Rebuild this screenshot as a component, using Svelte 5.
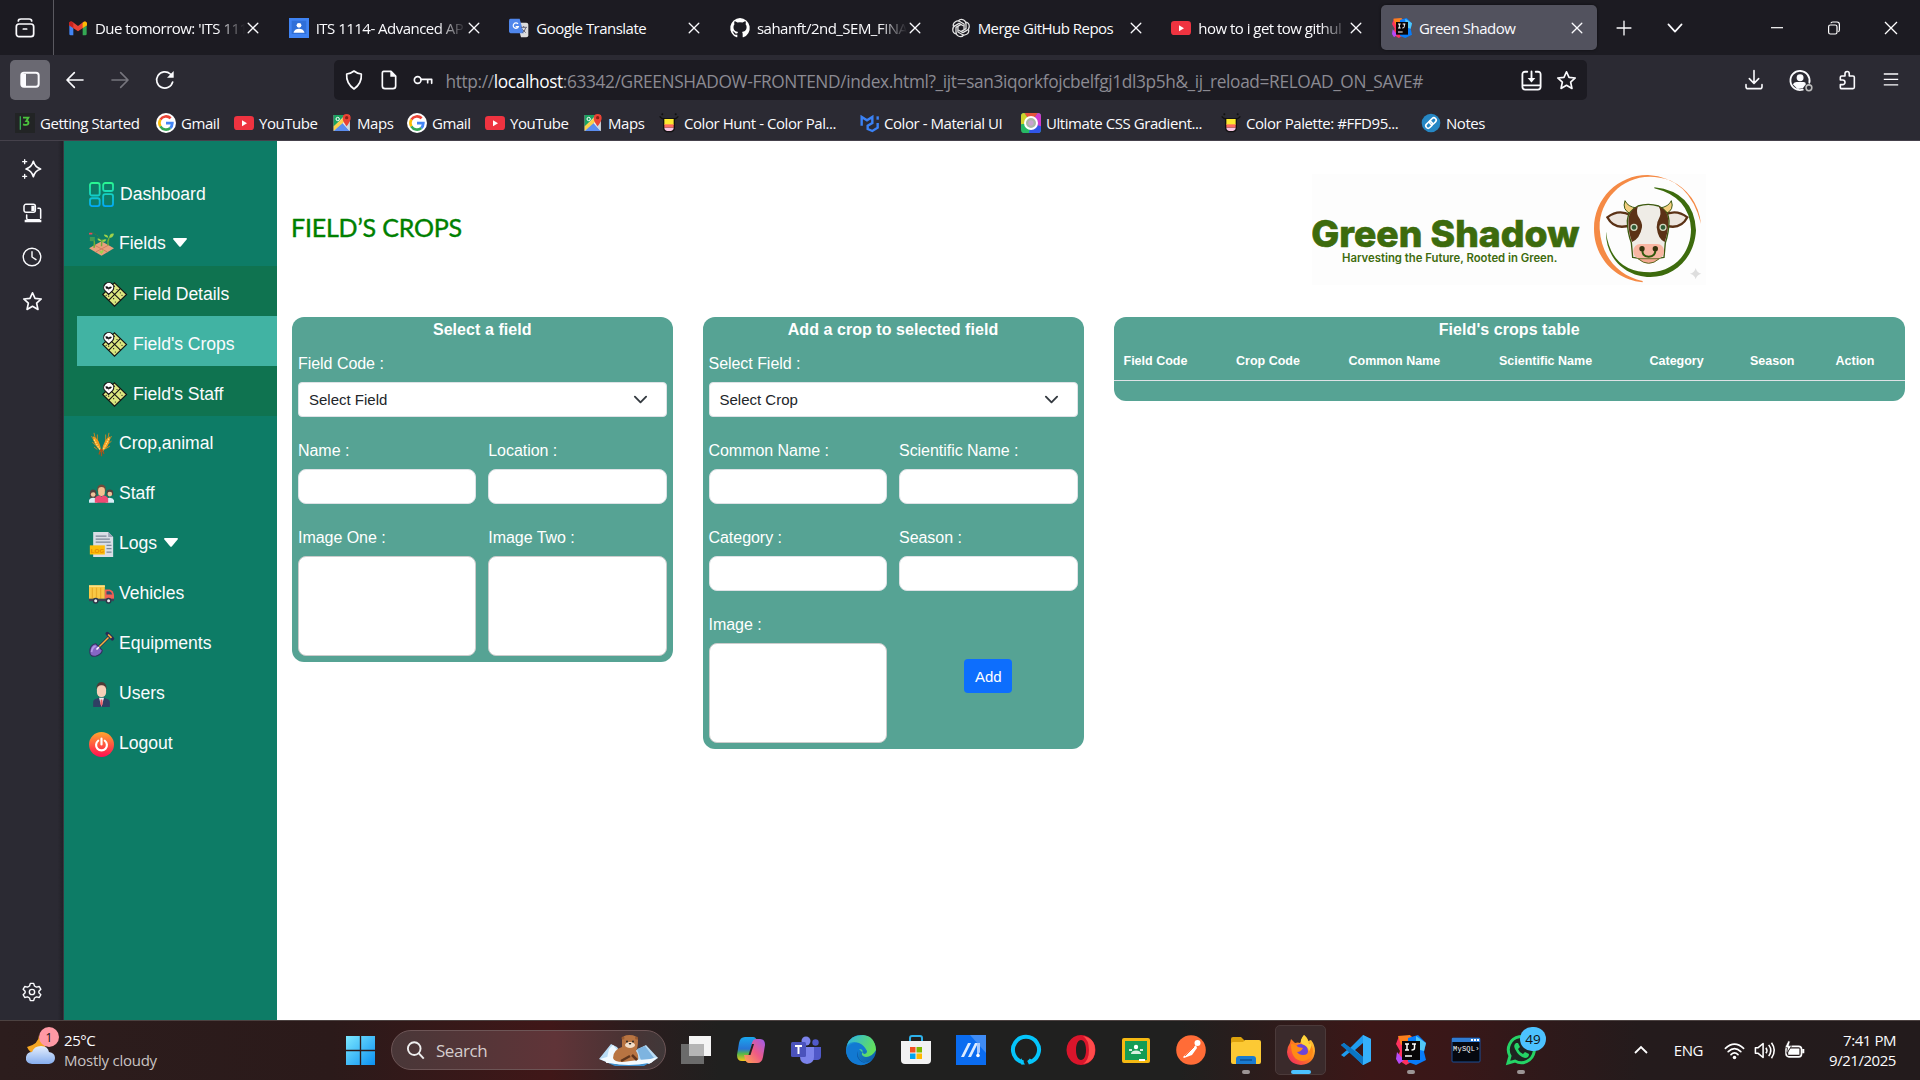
<script>
  const tabs = [
    { icon: 'gmail', text: "Due tomorrow: 'ITS 111", fade: true },
    { icon: 'classroomUser', text: 'ITS 1114- Advanced AP', fade: true },
    { icon: 'translate', text: 'Google Translate' },
    { icon: 'github', text: 'sahanft/2nd_SEM_FINA', fade: true },
    { icon: 'openai', text: 'Merge GitHub Repos' },
    { icon: 'youtube', text: 'how to i get tow githul', fade: true },
    { icon: 'idea', text: 'Green Shadow', active: true }
  ];

  const bookmarks = [
    { icon: 'flag', text: 'Getting Started' },
    { icon: 'google', text: 'Gmail' },
    { icon: 'youtube', text: 'YouTube' },
    { icon: 'maps', text: 'Maps' },
    { icon: 'google', text: 'Gmail' },
    { icon: 'youtube', text: 'YouTube' },
    { icon: 'maps', text: 'Maps' },
    { icon: 'colorhunt', text: 'Color Hunt - Color Pal...' },
    { icon: 'mui', text: 'Color - Material UI' },
    { icon: 'gradient', text: 'Ultimate CSS Gradient...' },
    { icon: 'colorhunt', text: 'Color Palette: #FFD95...' },
    { icon: 'link', text: 'Notes' }
  ];

  const menu = [
    { icon: 'dashboard', text: 'Dashboard', wide: true },
    { icon: 'fields', text: 'Fields', caret: true },
    { icon: 'plot', text: 'Field Details', sub: true },
    { icon: 'plot', text: "Field's Crops", sub: true, active: true },
    { icon: 'plot', text: "Field's Staff", sub: true },
    { icon: 'wheat', text: 'Crop,animal' },
    { icon: 'staff', text: 'Staff' },
    { icon: 'logs', text: 'Logs', caret: true },
    { icon: 'truck', text: 'Vehicles' },
    { icon: 'shovel', text: 'Equipments' },
    { icon: 'user', text: 'Users' },
    { icon: 'power', text: 'Logout' }
  ];

  const columns = ['Field Code', 'Crop Code', 'Common Name', 'Scientific Name', 'Category', 'Season', 'Action'];

  const apps = [
    { icon: 'taskview' },
    { icon: 'copilot' },
    { icon: 'teams' },
    { icon: 'edge' },
    { icon: 'store' },
    { icon: 'asus' },
    { icon: 'alexa' },
    { icon: 'opera' },
    { icon: 'classroom' },
    { icon: 'postman' },
    { icon: 'folder', running: true },
    { icon: 'firefox', active: true },
    { icon: 'vscode' },
    { icon: 'idea', running: true },
    { icon: 'mysql' },
    { icon: 'whatsapp', running: true, badge: '49' }
  ];

  const line = 'fill="none" stroke="#fbfbfe" stroke-linecap="round" stroke-linejoin="round"';
  const petal = (deg) =>
    `<path d="M11 4.500q3-4 8-1.500 4 2.200 3.500 7v6l-7 4" transform="rotate(${deg} 15 15)"/>`;

  // Every icon is drawn on a 30 x 30 grid.
  const icons = {
    // browser chrome
    archive: `<g ${line} stroke-width="2.600"><rect x="2" y="9" width="26" height="19" rx="4"/><path d="M5 4.500q0-3 4-3h12q4 0 4 3M12.500 16.500h5"/></g>`,
    close: `<path d="M7 7 23 23M23 7 7 23" fill="none" stroke="#fbfbfe" stroke-width="2.200" stroke-linecap="round"/>`,
    plus: `<path d="M15 2v26M2 15h26" fill="none" stroke="#fbfbfe" stroke-width="2.500" stroke-linecap="round"/>`,
    down: `<path d="M4 9l11 12L26 9" fill="none" stroke="#fbfbfe" stroke-width="2.800" stroke-linecap="round" stroke-linejoin="round"/>`,
    minimize: `<path d="M5 14.500h20" stroke="#fff" stroke-width="2"/>`,
    restore: `<g fill="none" stroke="#fff" stroke-width="2"><rect x="6" y="10" width="14" height="15" rx="3"/><path d="M10 7q0-2 3-2h7q4 0 4 4v9q0 3-2 3"/></g>`,
    winclose: `<path d="M5 5 25 25M25 5 5 25" stroke="#fff" stroke-width="2.200"/>`,
    panel: `<rect x="2" y="4" width="26" height="21" rx="4" fill="none" stroke="#fbfbfe" stroke-width="3"/><path d="M3 6h6v18H3z" fill="#fbfbfe"/>`,
    back: `<path d="M27 15H4M14 4 3 15l11 11" ${line} stroke-width="2.500"/>`,
    forward: `<path d="M3 15h23M16 4l11 11-11 11" fill="none" stroke="#76757d" stroke-width="2.500" stroke-linecap="round" stroke-linejoin="round"/>`,
    reload: `<path d="M26.500 18A12.200 12.200 0 1 1 23 6l3 3" ${line} stroke-width="2.500"/><path d="M28 1.500v10H18z" fill="#fbfbfe"/>`,
    shield: `<path d="M15 1.500q5 4 11 4.500 1 14-11 22.500Q3 20 4 6q6-.5 11-4.500z" ${line} stroke-width="2.500"/>`,
    doc: `<path d="M7 2h11l7 7v15q0 4-4 4H9q-4 0-4-4V5q0-3 2-3z" ${line} stroke-width="2.500"/><path d="M17 1v9h9z" fill="#fbfbfe"/>`,
    key: `<g ${line} stroke-width="2.500"><circle cx="7" cy="15" r="5"/><path d="M12 14h16v6M22 14v5"/></g>`,
    savepage: `<g ${line} stroke-width="2.600"><path d="M9 2.500H6Q2 2.500 2 6.500V24q0 4 4 4h18q4 0 4-4V6.500q0-4-4-4h-3M3 22h24M15 2v13"/></g><path d="M9.500 11.500h11L15 18z" fill="#fbfbfe"/>`,
    star: `<path d="M15 2.500l3.600 8 8.900.9-6.600 6 1.900 8.900-7.800-4.500-7.800 4.500 1.900-8.900-6.600-6 8.900-.9z" ${line} stroke-width="2.400"/>`,
    download: `<path d="M15 1v18M8 13l7 7 7-7M3 22v3q0 3 3 3h18q3 0 3-3v-3" ${line} stroke-width="2.400"/>`,
    account: `<path d="M18 27a12.500 12.500 0 1 1 8.500-9" ${line} stroke-width="2.400"/><circle cx="14.500" cy="11.500" r="4.500" fill="#fbfbfe"/><path d="M5 20q2-3 5-3h9q3 0 3 3l-4 5-7 1z" fill="#fbfbfe"/><circle cx="26" cy="24.500" r="3.800" fill="#2b2a33" stroke="#bbb" stroke-width="2"/>`,
    extension: `<path d="M5 15v-4q0-2 2-2h5V5.500a3.200 3.200 0 0 1 6.400 0V9H24q2 0 2 2v15q0 2-2 2H7q-2 0-2-2v-4h3.500a3.300 3.300 0 0 0 0-7z" ${line} stroke-width="2.400"/>`,
    hamburger: `<path d="M3 5h24M3 14h24M3 23h24" stroke="#fbfbfe" stroke-width="2.200"/>`,

    // browser side strip
    sparkle: `<path d="M17 3.500q2.500 9 11 11.500-8.500 2.500-11 11.500-2.500-9-11-11.500 8.500-2.500 11-11.500z" ${line} stroke-width="2.500"/><path d="M4 1v6M1 4h6M4 23v6M1 26h6" ${line} stroke-width="2"/>`,
    devices: `<g ${line} stroke-width="2.300"><rect x="3" y="2" width="17" height="12" rx="3"/><path d="M24 8h2q2 0 2 2v13M7 18v5q0 2 2 2h17"/></g><path d="M14 4h5v8h-5zM4 25h25v4H4z" fill="#fbfbfe"/>`,
    history: `<g ${line} stroke-width="2.100"><circle cx="15" cy="15" r="13.200"/><path d="M15 7v8l6 4"/></g>`,
    gear: `<g ${line} stroke-width="2.100"><path d="M12.500 2h5l1.200 4 3 1.700 4.200-1 2.400 4.300-3 3v2l3 3-2.400 4.300-4.200-1-3 1.700-1.200 4h-5l-1.200-4-3-1.700-4.200 1L1.700 19l3-3v-2l-3-3 2.400-4.300 4.200 1 3-1.700z"/><circle cx="15" cy="15" r="4"/></g>`,

    // site icons
    gmail: `<path d="M2 8v16q0 2 2 2h4V14z" fill="#4285f4"/><path d="M28 8v16q0 2-2 2h-4V14z" fill="#34a853"/><path d="M1.500 8q1-4 5-2.500L15 12l8.500-6.500q4-1.500 5 2.500v3L15 20 1.500 11z" fill="#ea4335"/><path d="M22 7q5-4 6.500 1v3L22 15z" fill="#fbbc04"/><path d="M1.500 8v3L8 15V7Q2 3 1.500 8z" fill="#c5221f"/>`,
    classroomUser: `<path d="M0 0h30v30H0z" fill="#3f83f3"/><path d="M4 4h22v20H4z" fill="#2f6fd8"/><circle cx="15" cy="11" r="3.600" fill="#fff"/><path d="M7 21q2-5 8-5t8 5v1H7z" fill="#fff"/>`,
    translate: `<path d="M12 7h14q3 0 3 3v16q0 3-3 3h-8z" fill="#dcdcdc"/><path d="M2 1h14l6 22H4q-4 0-4-4V4q0-3 2-3z" fill="#4f86ec"/><path d="M13.500 9a4 4 0 1 0 .5 4H10" fill="none" stroke="#fff" stroke-width="1.800"/><path d="M18 14h9M22 12v2M25 15q-2 6-5 7M20 17l5 5" stroke="#667" stroke-width="1.500" fill="none"/>`,
    github: `<path d="M15 0a15 15 0 0 0-5 29c1 .2 1-.4 1-1v-3c-4 1-5-1-5.500-2.500-.6-1-1-1.500-1.800-2 1.500-.8 3 .5 3.500 1.500 1.200 1.800 3 1.500 4 1 .1-1 .5-1.600 1-2-3.500-.5-7-2-7-7.500 0-1.700.6-3 1.500-4-.2-.7-.7-2.500.1-4.500 1.500 0 3 1 4.200 1.800a14 14 0 0 1 8 0C20.500 6 22 5 23.300 5c.8 2 .3 3.800.1 4.500 1 1 1.500 2.300 1.500 4 0 5.500-3.500 7-7 7.500.8.700 1.100 1.700 1.100 3v4c0 .600 0 1.200 1 1A15 15 0 0 0 15 0z" fill="#fff"/>`,
    openai: `<g fill="none" stroke="#e4e4e4" stroke-width="1.900" stroke-linejoin="round">${[0, 60, 120, 180, 240, 300].map(petal).join('')}</g>`,
    youtube: `<rect y="4.500" width="30" height="21" rx="5" fill="#ef3340"/><path d="M12 11v9l7.500-4.500z" fill="#fff"/>`,
    idea: `<path d="M3 1h12l4 4v20l-9 5-9-6 3-8-4-7z" fill="#fe315d"/><path d="M2 1 14 0l4 5L5 10z" fill="#fc801d"/><path d="M12 3 22 0l8 8-2 9 2 8-10 5-8-3z" fill="#087cfa"/><path d="M20 1l10 7-2 8-8-2z" fill="#52c8f5"/><path d="M1 17l7 8-5 4-3-5z" fill="#b74af7"/><path d="M6 6h18v19H6z" fill="#080506"/><path d="M9 9h4M11 9v6M9 15h4M16 9h4M18.500 9v4q0 2-3 2M9 21h7" fill="none" stroke="#fff" stroke-width="1.500"/>`,
    flag: `<path d="M0 0h30v30H0z" fill="#222425"/><path d="M8 5v20" stroke="#35a853" stroke-width="2"/><path d="M12 7h8l-3 5q4 0 3 4-1 3-8 1" fill="none" stroke="#4bc23c" stroke-width="2.800"/>`,
    google: `<circle cx="15" cy="15" r="15" fill="#fff"/><g fill="none" stroke-width="4"><path d="M6.500 10a10 10 0 0 1 15.500-2" stroke="#ea4335"/><path d="M6.500 20a10 10 0 0 1 0-10" stroke="#fbbc05"/><path d="M21.500 22.500A10 10 0 0 1 6.500 20" stroke="#34a853"/><path d="M15 15.200h9.500q-.2 4.800-3 7.300" stroke="#4285f4"/></g>`,
    maps: `<g transform="translate(1.500 0)"><path d="M1 3h24v24H1z" fill="#eee"/><path d="M1 3h17L1 21z" fill="#1aa260"/><path d="M1 27 13 14l12 13z" fill="#5b8def"/><path d="M1 20v7l24-21v-3h-5z" fill="#fbd14b"/><path d="M17 18l8 9V13z" fill="#cfd8dc"/><circle cx="7" cy="9" r="2.500" fill="none" stroke="#fff" stroke-width="1.500"/><path d="M20.500 20q-6-7-6-12.500a6 6 0 0 1 12 0Q26.500 12 20.500 20z" fill="#ea4335"/><circle cx="20.500" cy="7" r="2.500" fill="#8c2116"/></g>`,
    colorhunt: `<g fill="none" stroke="#111" stroke-width="2"><path d="M1 5q4 5 7 3M29 5q-4 5-7 3"/></g><circle cx="5" cy="2" r="1.500" fill="#111"/><circle cx="25" cy="2" r="1.500" fill="#111"/><path d="M6 8h18v14q0 7-9 7t-9-7z" fill="#111"/><path d="M8 9h14v9H8z" fill="#fde92f"/><path d="M8 17h14v5H8z" fill="#ff6b5e"/><path d="M8 22h14q0 5-7 5t-7-5z" fill="#f9c7e4"/>`,
    mui: `<g fill="none" stroke="#3b82f6" stroke-width="3.600"><path d="M4 19V6l8 5 8-5v9l-7 4v5l7 3 8-5v-7"/><path d="M28 5v5"/></g>`,
    gradient: `<rect width="30" height="30" rx="5" fill="#27b965"/><path d="M5 0h20L15 15z" fill="#e8533c"/><path d="M25 0q5 0 5 5v20L15 15z" fill="#d03bd0"/><path d="M5 0Q0 0 0 5v12l15-2z" fill="#cfd22c"/><path d="M30 20v5q0 5-5 5H12l3-15z" fill="#3156e8"/><circle cx="15" cy="15" r="9" fill="#a9b6a6" stroke="#fff" stroke-width="3"/><circle cx="15" cy="15" r="4" fill="#c9a4cf"/>`,
    link: `<circle cx="15" cy="15" r="14" fill="#2687c4"/><g fill="none" stroke="#fff" stroke-width="2.400" transform="rotate(-45 15 15)"><rect x="5.500" y="11.500" width="11" height="7" rx="3.500"/><rect x="13.500" y="11.500" width="11" height="7" rx="3.500"/></g>`,

    // site menu
    dashboard: `<g fill="none" stroke="url(#g-dash)" stroke-width="2.200"><rect x="1.200" y="1.200" width="11.600" height="15" rx="2.500"/><rect x="17" y="1.200" width="11.800" height="9.600" rx="2.500"/><rect x="1.200" y="19.500" width="11.600" height="9.400" rx="2.500"/><rect x="17" y="14.500" width="11.800" height="14.400" rx="2.500"/></g>`,
    fields: `<path d="M0 19.500 15 11l15 8.500-15 9z" fill="#e9a07c"/><path d="M7 16l15 8M23 16 8 24" stroke="#c77b5c" stroke-width="1"/><path d="M6 19q1-7 0-9M15 17q0-5 1-8M23 16q-1-5 1-9" stroke="#6fae35" stroke-width="1.800" fill="none"/><path d="M23 7q-5-1-5-4 5 0 5 4zM24 7q1-6 6-5-1 5-6 5zM15 11q-4 0-5-3 4-1 5 3zM16 12q4 0 5-3-5-1-5 3z" fill="#9fd24a"/><path d="M1 1h4l6 4 3 4" stroke="#4e7a3a" stroke-width="1" stroke-dasharray="2 1" fill="none"/><path d="M0 1h4v2H0z" fill="#e4485d"/><path d="M1 6h6v5H1z" fill="#3f9a55"/><path d="M13 23l2 2 2-3" stroke="#9fd24a" stroke-width="2" fill="none"/>`,
    plot: `<g stroke="#111" stroke-width="1.300"><path d="M15 1 29.500 15 15 29 .800 15z" fill="#dbe67f"/><path d="M8 8l14.500 14M22 8 8 22" fill="none"/></g><g fill="#111"><circle cx="15" cy="5" r=".7"/><circle cx="18" cy="9" r=".7"/><circle cx="22" cy="13" r=".7"/><circle cx="24" cy="16" r=".7"/><circle cx="14" cy="20" r=".7"/><circle cx="16" cy="24" r=".7"/><circle cx="5" cy="16" r=".7"/><circle cx="8" cy="17" r=".7"/></g><path d="M8 15 3.500 10.500A6 6 0 1 1 13 10z" fill="#fff" stroke="#111" stroke-width="1.300"/><path d="M8 10V6M8 8Q4 9 4.500 5.500 8 5 8 8zM8 8q3 .5 3.500-2Q8 5 8 8z" fill="#111" stroke="#111" stroke-width=".5"/>`,
    wheat: `<g stroke="#e58a18" stroke-width="1" fill="none"><path d="M3 5l4 7M6 1l2 9M4 12l4 4M6 18l4 3M24 1l-2 10M27 5l-4 7M27 11l-5 4M25 17l-5 3M10 3v8M20 3v8"/></g><path d="M4.500 5q8 2 10 17Q6 18 4.500 5zM25.500 5q-8 3-10 18 9-4 10-18z" fill="#f39a1e"/><path d="M6 9l8 14M24 8l-8 15" stroke="#ffe07a" stroke-width="1.500" stroke-dasharray="2 1"/><path d="M15 20v9M14 21l-2 6M16 21l2 5" stroke="#a4531c" stroke-width="1.500"/>`,
    staff: `<path d="M1 14q0-5 4-5t4 5v5H1zM21 13q0-4 4-4t4 4v3h-8z" fill="#54413d"/><circle cx="5" cy="15" r="2.800" fill="#f0c29a"/><circle cx="25" cy="14.500" r="2.800" fill="#f0c29a"/><path d="M0 25v-3q1-3 5-3t5 3v3zM20 25v-3q1-3 5-3t5 3v3z" fill="#d8edf6"/><path d="M10 11q-1-8 5-8t5 8z" fill="#6f4a3a"/><rect x="11" y="6" width="8" height="11" rx="4" fill="#f2c190"/><path d="M7 25v-5q1-3 6-4l2 2 2-2q5 1 6 4v5z" fill="#ee4a73"/>`,
    logs: `<path d="M5 0h18l6 6v24H5z" fill="#d9dee6"/><path d="M23 0v6h6z" fill="#97a3b5"/><path d="M8 5h13M8 8.500h17M8 12h18M21 16h6M21 20h6M21 24h6" stroke="#7b8797" stroke-width="1.500"/><path d="M1 16h18v11H1z" fill="#fdbd0a"/><text x="2.200" y="24.800" font-family="Liberation Sans, sans-serif" font-size="7.500" font-weight="700" fill="#e88a00">LOG</text>`,
    truck: `<path d="M0 4h19v17H0z" fill="#f9c845"/><path d="M0 4h19v2H0z" fill="#fde082"/><path d="M4 7v13M9 7v13M14 7v13" stroke="#e9ac2b" stroke-width="1.500"/><path d="M19 9h6q4 1 5 7v5H19z" fill="#ee6155"/><path d="M21 11h4q2 1 3 4h-7z" fill="#35516b"/><path d="M0 20h30v3H0z" fill="#3b4557"/><circle cx="8" cy="22.500" r="3.500" fill="#2d3748"/><circle cx="8" cy="22.500" r="1.800" fill="#eee"/><circle cx="23.500" cy="22.500" r="3.500" fill="#2d3748"/><circle cx="23.500" cy="22.500" r="1.800" fill="#eee"/>`,
    shovel: `<path d="M11 19 24 6" stroke="#2a2d55" stroke-width="3.500"/><path d="M11 19 24 6" stroke="#f5b53d" stroke-width="1.800"/><path d="M22 2l6 6" stroke="#2a2d55" stroke-width="4.500" stroke-linecap="round"/><path d="M23 3l4 4" stroke="#f5b53d" stroke-width="2"/><path d="M1 24q0-9 7-10l8 8q-1 5-8 7-7 1-7-5z" fill="#8566c4" stroke="#33305f" stroke-width="1.300"/><path d="M3 24q1-6 5-7" stroke="#b59ae8" stroke-width="2" fill="none"/><path d="M9 21l3-3" stroke="#fff" stroke-width="2"/>`,
    user: `<path d="M9 8q0-8 6-8t6 8z" fill="#4d3a36"/><rect x="9.500" y="4" width="11" height="14" rx="5" fill="#f6d0b8"/><path d="M5 30v-6q0-3 4-4l3-1h6l3 1q4 1 4 4v6z" fill="#2f3f63"/><path d="M12 19h6l-3 11z" fill="#eee"/><path d="M14 21h2l.5 5-1.500 3-1.500-3z" fill="#ef5d64"/>`,
    power: `<circle cx="15" cy="15" r="15" fill="url(#g-power)"/><path d="M11 10.500a6.500 6.500 0 1 0 8 0M15 8v7" fill="none" stroke="#fff" stroke-width="2.600" stroke-linecap="round"/>`,

    // taskbar
    windows: `<g fill="url(#g-win)"><path d="M0 0h14.300v14.300H0zM15.700 0H30v14.300H15.700zM0 15.700h14.300V30H0zM15.700 15.700H30V30H15.700z"/></g>`,
    taskview: `<path d="M8 1h22v20H8z" fill="#f4f4f4"/><path d="M0 9h23v20H0z" fill="#6b6b6b"/><path d="M8 9h15v12H8z" fill="#b5b5b5"/>`,
    copilot: `<path d="M9 2h8q3 0 4 4l1 4h-5l-3 12q-1 4-4 4H6q-5 0-5-6l2-12q1-6 6-6z" fill="url(#g-cop1)"/><path d="M21 28h-8q-3 0-4-4l-1-4h5l3-12q1-4 4-4h4q5 0 5 6l-2 12q-1 6-6 6z" fill="url(#g-cop2)"/><path d="M12.500 20l3.500-11h2L14.500 20z" fill="#222"/>`,
    teams: `<circle cx="15" cy="6" r="4.500" fill="#7b83eb"/><circle cx="24.500" cy="7.500" r="3.200" fill="#5059c9"/><path d="M20 12h10v9q0 4-4 4h-6z" fill="#5059c9"/><path d="M9 12h14v10q0 6-7 7-7-1-7-7z" fill="#7b83eb"/><rect x="0" y="7" width="15" height="15" rx="1.500" fill="#4b53bc"/><path d="M4 11h7M7.500 11v8" stroke="#fff" stroke-width="2"/>`,
    edge: `<circle cx="15" cy="15" r="15" fill="url(#g-edge)"/><path d="M0 15Q3 7 12 8q8 1 9 9-4-4-8 0-2 8 6 10 5 0 8-3-6 7-14 6Q1 28 0 15z" fill="#1279d2"/><path d="M13 14q5 0 3 4-1 3 4 4 6 0 10-7-1-14-13-15Q4 0 1 10q5-5 12-2 5 2 8 8 0 3-3 3z" fill="url(#g-edge2)"/><path d="M12 16q-3 7 4 11 5 2 10-3-6 6-12 1-3-3-2-9z" fill="#0b4f96"/>`,
    store: `<path d="M9 7V3q0-2 2-2h8q2 0 2 2v4" fill="none" stroke="#2db1ea" stroke-width="2"/><path d="M0 6h30v19q0 4-4 4H4q-4 0-4-4z" fill="#f2f2f2"/><path d="M9 12h5.500v5.500H9z" fill="#f25022"/><path d="M15.500 12H21v5.500h-5.500z" fill="#7fba00"/><path d="M9 18.500h5.500V24H9z" fill="#00a4ef"/><path d="M15.500 18.500H21V24h-5.500z" fill="#ffb900"/>`,
    asus: `<path d="M0 0h30v30H0z" fill="#0a6cf0"/><path d="M30 0v18L14 0z" fill="#3f8cf5"/><path d="M5 22 12 8h3L8 22zM12 22l7-14h3l-7 14z" fill="#dcebff"/><path d="M21 8h3v9l-3 5z" fill="#a9cbff"/><circle cx="22" cy="20.500" r="1.800" fill="#fff"/>`,
    alexa: `<path d="M12.500 27.500A13 13 0 1 1 17.500 27.500Q20 25.500 20.500 24.500" fill="none" stroke="#05c5fb" stroke-width="4"/><path d="M10 23l4 6.500h-4z" fill="#05c5fb"/>`,
    opera: `<path fill-rule="evenodd" d="M15 0a14.500 15 0 1 0 .01 0zM15 5c3 0 5 4 5 10s-2 10-5 10-5-4-5-10 2-10 5-10z" fill="#d9152b"/><path d="M17 1q12 2 12 14T17 29q6-4 6-14T17 1z" fill="#ff4b4b"/>`,
    classroom: `<rect x="1" y="3" width="28" height="25" rx="2" fill="#f5b912"/><path d="M4 6h22v19H4z" fill="#149c55"/><circle cx="15" cy="12" r="2.200" fill="#fff"/><path d="M10 19q0-3.500 5-3.500t5 3.500zM8 14h3v2H8zM19 14h3v2h-3z" fill="#d8efdf"/><path d="M18 24h6v2h-6z" fill="#fff"/>`,
    postman: `<circle cx="15" cy="15" r="14.800" fill="#ff6c37"/><circle cx="21.500" cy="8" r="3" fill="#fff"/><path d="M20 10 7 22l1 1 8-3 5-7z" fill="#fff"/><path d="M18 12 9 21" stroke="#ff6c37" stroke-width="1"/>`,
    folder: `<path d="M0 4q0-2 2-2h8l4 4v6H0z" fill="#dda20d"/><path d="M0 9q0-2 2-2h10l2-2h14q2 0 2 2v20q0 2-2 2H2q-2 0-2-2z" fill="#fcc934"/><path d="M5 29v-5q0-3 3-3h14q3 0 3 3v5z" fill="#1a7bd0"/><path d="M9 25h12" stroke="#0b4f94" stroke-width="1.500"/>`,
    firefox: `<path d="M15 30Q2 29 1 17q0-5 3-9l1-4 4 4q3-1 5 0l4-8q3 2 4 6l3-1q4 5 4 11-1 13-14 14z" fill="url(#g-fox)"/><circle cx="15" cy="16" r="7" fill="#6d45d8"/><path d="M5 9q5 0 7 3l5 1q-2 4-6 4 2 3 6 3 5 0 7-5 0-5-4-8l3 1q6 6 3 12-4 6-10 6Q5 25 5 9z" fill="#ff8a16"/><path d="M18 0q-5 5-2 9 6 2 7 7 3-4 2-8-1 1-2 1-1-6-5-9z" fill="#ffd43b"/>`,
    vscode: `<path d="M22 0l8 4v22l-8 4L9 17l-6 5-3-2 6-5-6-5 3-2 6 5zM22 8l-8 7 8 7z" fill="#1f9cf0" fill-rule="evenodd"/><path d="M22 0l8 4v22l-8 4z" fill="#35b0fb"/><path d="M3 8 0 10l22 20v-8z" fill="#0b76c4"/>`,
    mysql: `<rect x="1" y="3" width="28" height="24" rx="1" fill="#05080f" stroke="#1b4f97" stroke-width="1"/><path d="M1 3h28v4H1z" fill="#2f7cd3"/><path d="M20 4h2v2h-2zM23 4h2v2h-2zM26 4h2v2h-2z" fill="#fff"/><text x="2" y="15.500" font-family="Liberation Mono, monospace" font-size="7" textLength="26" fill="#fff">MySQL›</text>`,
    whatsapp: `<path d="M2 28l2-7A13 13 0 1 1 9 26z" fill="#1e2321" stroke="#25d366" stroke-width="3"/><path d="M10 8q-3 2-1 6 4 8 10 9 4 0 4-4l-4-2-2 2q-4-2-5-5l2-2-2-4z" fill="#25d366"/>`,
    search: `<g fill="none" stroke="#eee" stroke-width="3"><circle cx="13" cy="12" r="10"/><path d="M20 19l8 9"/></g>`,
    chevronUp: `<path d="M5 20l10-10 10 10" fill="none" stroke="#fff" stroke-width="3"/>`,
    wifi: `<g fill="none" stroke="#fff" stroke-width="2.400" stroke-linecap="round"><path d="M2 12q13-12 26 0M6 16.500q9-8.500 18 0M10 21q5-5 10 0"/></g><circle cx="15" cy="25" r="2.500" fill="#fff"/>`,
    volume: `<g fill="none" stroke="#fff" stroke-width="2.200" stroke-linejoin="round"><path d="M2 11h4l7-6v20l-7-6H2zM17 11q3 4 0 8M21 7q6 8 0 16M25 4q8 11 0 22"/></g>`,
    battery: `<rect x="3" y="9" width="22" height="15" rx="4" fill="none" stroke="#fff" stroke-width="2.400"/><path d="M9 12h13v9H6v-4zM26 13h3v6h-3z" fill="#fff"/><path d="M6 1 1 11h4l-1 8 7-11H7l2-6z" fill="#fff" stroke="#241b1c" stroke-width="1"/>`,
    weather: `<path d="M14 0q0 9-12 12 3 7 10 7l10-9q-7-2-8-10z" fill="#f5a623"/><path d="M7 29q-7-1-6-7 1-5 6-5 2-6 9-6t8 6q6 1 6 6t-6 6z" fill="url(#g-cloud)"/>`
  };
</script>

{#snippet icon(name, cls = '')}
  <svg class="icon {cls}" viewBox="0 0 30 30" aria-hidden="true">{@html icons[name]}</svg>
{/snippet}

{#snippet input(label)}
  <div class="field">
    <div class="label">{label} :</div>
    <div class="box"></div>
  </div>
{/snippet}

{#snippet select(label, value)}
  <div class="field full">
    <div class="label">{label} :</div>
    <div class="box select">
      <span>{value}</span>
      <svg class="chev" viewBox="0 0 16 16"><path d="m2 5 6 6 6-6" /></svg>
    </div>
  </div>
{/snippet}

{#snippet image(label)}
  <div class="field">
    <div class="label">{label} :</div>
    <div class="box picture"></div>
  </div>
{/snippet}

<svg class="defs" aria-hidden="true">
  <defs>
    <linearGradient id="g-dash" gradientUnits="userSpaceOnUse" x1="0" y1="0" x2="0" y2="30"><stop offset="0" stop-color="#2afa8e" /><stop offset="1" stop-color="#00a6f9" /></linearGradient>
    <linearGradient id="g-power" x1="0" y1="0" x2="0" y2="1"><stop offset="0" stop-color="#ffa62e" /><stop offset="1" stop-color="#ff0d52" /></linearGradient>
    <linearGradient id="g-win" gradientUnits="userSpaceOnUse" x1="0" y1="0" x2="30" y2="30"><stop offset="0" stop-color="#7ce8ff" /><stop offset="1" stop-color="#0b91f2" /></linearGradient>
    <linearGradient id="g-cop1" x1="0" y1="0" x2="0" y2="1"><stop offset="0" stop-color="#1aa7ee" /><stop offset=".5" stop-color="#2874d5" /><stop offset=".7" stop-color="#58b848" /><stop offset="1" stop-color="#f4c61a" /></linearGradient>
    <linearGradient id="g-cop2" x1="1" y1="0" x2="0" y2="1"><stop offset="0" stop-color="#9a5cf0" /><stop offset=".5" stop-color="#ee5a86" /><stop offset="1" stop-color="#ffa94d" /></linearGradient>
    <linearGradient id="g-edge" x1="0" y1="0" x2="1" y2="1"><stop offset="0" stop-color="#1b9de2" /><stop offset="1" stop-color="#0c59a4" /></linearGradient>
    <linearGradient id="g-edge2" x1="0" y1="0" x2="1" y2=".4"><stop offset="0" stop-color="#2cb3e8" /><stop offset="1" stop-color="#62e05c" /></linearGradient>
    <linearGradient id="g-fox" x1="1" y1="0" x2="0" y2="1"><stop offset="0" stop-color="#ffe23b" /><stop offset=".5" stop-color="#ff7b1e" /><stop offset="1" stop-color="#ee1b6c" /></linearGradient>
    <linearGradient id="g-cloud" x1="0" y1="0" x2="0" y2="1"><stop offset="0" stop-color="#e6effc" /><stop offset="1" stop-color="#86aeef" /></linearGradient>
  </defs>
</svg>

<div class="screen">
  <header class="tabbar">
    <div class="firstcell">{@render icon('archive', 's20')}</div>
    <div class="tabs">
      {#each tabs as t}
        <div class="tab" class:active={t.active}>
          {@render icon(t.icon, 's20')}
          <span class="tabtext" class:fade={t.fade}>{t.text}</span>
          {@render icon('close', 's18')}
        </div>
      {/each}
    </div>
    <div class="tabtools">
      {@render icon('plus', 's16')}
      {@render icon('down', 's18')}
    </div>
    <div class="wincontrols">
      {@render icon('minimize', 's18')}
      {@render icon('restore', 's18')}
      {@render icon('winclose', 's18')}
    </div>
  </header>

  <div class="navbar">
    <div class="navbuttons">
      <div class="panelbtn">{@render icon('panel', 's20')}</div>
      {@render icon('back', 's20')}
      {@render icon('forward', 's20')}
      {@render icon('reload', 's20')}
    </div>
    <div class="urlbar">
      {@render icon('shield', 's20')}
      {@render icon('doc', 's20')}
      {@render icon('key', 's20')}
      <div class="url">http://<b>localhost</b>:63342/GREENSHADOW-FRONTEND/index.html?_ijt=san3iqorkfojcbelfgj1dl3p5h&_ij_reload=RELOAD_ON_SAVE#</div>
      {@render icon('savepage', 's21')}
      {@render icon('star', 's21')}
    </div>
    <div class="navtools">
      {@render icon('download', 's20')}
      {@render icon('account', 's23')}
      {@render icon('extension', 's20')}
      {@render icon('hamburger', 's18')}
    </div>
  </div>

  <div class="bookmarks">
    {#each bookmarks as b}
      <div class="bookmark">{@render icon(b.icon, 's20')}<span>{b.text}</span></div>
    {/each}
  </div>

  <div class="body">
    <aside class="strip">
      {@render icon('sparkle', 's20')}
      {@render icon('devices', 's20')}
      {@render icon('history', 's20')}
      {@render icon('star', 's21')}
      <div class="grow"></div>
      {@render icon('gear', 's20')}
    </aside>

    <nav class="sidebar">
      {#each menu as m}
        <div class="item" class:sub={m.sub} class:active={m.active} class:wide={m.wide}>
          <div class="inner">
            {@render icon(m.icon, 's25')}
            <span>{m.text}</span>
            {#if m.caret}<svg class="caret" viewBox="0 0 14 9"><path d="M1 0h12q1.500 0 .6 1.400L8 8.300q-1 1-2 0L.4 1.400Q-.5 0 1 0z" fill="#fff" /></svg>{/if}
          </div>
        </div>
      {/each}
    </nav>

    <main>
      <div class="banner">
        <h1>FIELD’S CROPS</h1>
        <svg class="logo" viewBox="66 42 1182 333" role="img" aria-label="Green Shadow">
          <path d="M66 42h1182v333H66z" fill="#fdfdfd" />
          <text class="brand" x="64" y="262" textLength="804" lengthAdjust="spacingAndGlyphs">Green Shadow</text>
          <text class="tag" x="156" y="306" textLength="646" lengthAdjust="spacingAndGlyphs">Harvesting the Future, Rooted in Green.</text>
          <path d="M1233 192Q1222 100 1140 61C1020 18 925 110 929 207 934 290 985 348 1058 363v4C972 358 912 290 912 206 912 115 985 44 1074 45q125 8 159 147z" fill="#f58a45" />
          <path d="M1093 82q119 13 125 129c-4 82-64 140-137 140-77 0-135-60-133-136q15 122 133 122c69-3 122-55 122-129q-5-97-110-123z" fill="#3d6b0d" />
          <path d="M1005 122q-10 28 18 40l16-18q-26-4-34-22zM1144 122q10 28-18 40l-16-18q26-4 34-22z" fill="#f4ce80" stroke="#3d5a10" stroke-width="3" />
          <path d="M952 172q34-26 70-6l4 28q-52 20-74-22zM1192 172q-34-26-70-6l-4 28q52 20 74-22z" fill="#ede6df" stroke="#5b3216" stroke-width="7" />
          <path d="M1044 138q30-10 62 0 30 14 31 44 0 34-11 66l-4 44q-46 10-94 0l-4-44q-12-32-12-66 2-30 32-44z" fill="#efece6" stroke="#3d5a10" stroke-width="4" />
          <path d="M1044 139q-28 12-29 43 0 34 11 64 24-10 30-44 2-14-12-34-6-14 0-29zM1106 139q28 12 29 43 0 34-11 64-20-8-24-44 0-16 10-34 4-14-4-29z" fill="#5b3216" />
          <path d="M1044 296q32 28 64 0z" fill="#f4a790" stroke="#5d6a20" stroke-width="3" />
          <rect x="1030" y="252" width="92" height="43" rx="20" fill="#f8b6a2" />
          <g fill="#2f5a34" stroke="#cfd6bd" stroke-width="4"><circle cx="1032" cy="202" r="9" /><circle cx="1119" cy="202" r="9" /></g>
          <path d="M1058 266q-4 24 18 24t20-24" fill="none" stroke="#33590d" stroke-width="6" />
          <circle cx="1056" cy="266" r="8" fill="#33340d" /><circle cx="1096" cy="266" r="8" fill="#33340d" />
          <path d="M1217 324q3 14 17 17-14 3-17 17-3-14-17-17 14-3 17-17z" fill="#dedede" />
        </svg>
      </div>

      <div class="cards">
        <section class="card form">
          <h2>Select a field</h2>
          {@render select('Field Code', 'Select Field')}
          {@render input('Name')}
          {@render input('Location')}
          {@render image('Image One')}
          {@render image('Image Two')}
        </section>

        <section class="card form">
          <h2>Add a crop to selected field</h2>
          {@render select('Select Field', 'Select Crop')}
          {@render input('Common Name')}
          {@render input('Scientific Name')}
          {@render input('Category')}
          {@render input('Season')}
          {@render image('Image')}
          <div class="action"><button>Add</button></div>
        </section>

        <section class="card table">
          <h2>Field's crops table</h2>
          <div class="thead">
            {#each columns as c}<div>{c}</div>{/each}
          </div>
        </section>
      </div>
    </main>
  </div>

  <footer class="taskbar">
    <div class="weather">
      <div class="wicon">{@render icon('weather', 's30')}<span class="alert">1</span></div>
      <div class="wtext"><div>25°C</div><div class="dim">Mostly cloudy</div></div>
    </div>
    <div class="start">{@render icon('windows', 's29')}</div>
    <div class="searchbox">
      {@render icon('search', 's19')}
      <span>Search</span>
      <svg class="otter" viewBox="0 0 60 31">
        <path d="M0 24 12 9l6 3 5 8 10-3 14-7 12 13-9 6H12z" fill="#b9dcf5" />
        <path d="M10 14l4-4 5 6-6 12H7z" fill="#eff8ff" /><path d="M38 14l8-3 9 12-12 5z" fill="#7eb4e0" />
        <path d="M1 24q12-5 28-1t30-1l-7 6q-22 5-42 0z" fill="#f3faff" /><path d="M9 28q21 4 41 0l-5 3H16z" fill="#3e8fce" />
        <path d="M14 23q0-8 9-11V5q0-5 7.500-5T39 5q0 8-2 11 3 4 2 9l-15 2q-9 0-10-4z" fill="#b87442" />
        <circle cx="24" cy="3" r="1.500" fill="#9a5a30" /><circle cx="37.500" cy="3" r="1.500" fill="#9a5a30" />
        <ellipse cx="31" cy="10" rx="5" ry="3" fill="#f2ddc8" /><circle cx="28" cy="6.500" r=".9" fill="#222" /><circle cx="34" cy="6.500" r=".9" fill="#222" /><path d="M29.500 8h3L31 10z" fill="#222" />
        <path d="M22 26l9-5M38 25l-5-5" stroke="#5e351d" stroke-width="2.500" />
      </svg>
    </div>
    <div class="apps">
      {#each apps as a}
        <div class="app" class:active={a.active} class:running={a.running}>
          {@render icon(a.icon, 's30')}
          {#if a.badge}<span class="badge">{a.badge}</span>{/if}
        </div>
      {/each}
    </div>
    <div class="tray">
      {@render icon('chevronUp', 's18')}
      <span class="lang">ENG</span>
      {@render icon('wifi', 's21')}
      {@render icon('volume', 's21')}
      {@render icon('battery', 's21')}
      <div class="clock"><div>7:41 PM</div><div>9/21/2025</div></div>
    </div>
  </footer>
</div>

<style>
  :global(body) {
    margin: 0;
    background: #fff;
  }
  * {
    box-sizing: border-box;
  }
  .defs {
    position: absolute;
    width: 0;
    height: 0;
  }
  .screen {
    width: 1920px;
    height: 1080px;
    display: flex;
    flex-direction: column;
    overflow: hidden;
    font-family: 'Open Sans', 'Noto Sans', sans-serif;
    color: #fbfbfe;
  }
  .icon {
    flex: none;
    display: block;
    width: 20px;
    height: 20px;
    overflow: visible;
  }
  .s16 { width: 16px; height: 16px; }
  .s18 { width: 18px; height: 18px; }
  .s19 { width: 19px; height: 19px; }
  .s21 { width: 21px; height: 21px; }
  .s23 { width: 23px; height: 23px; }
  .s25 { width: 25px; height: 25px; }
  .s29 { width: 29px; height: 29px; }
  .s30 { width: 30px; height: 30px; }

  /* tab bar */
  .tabbar {
    height: 55px;
    background: #1c1b22;
    display: flex;
    align-items: center;
  }
  .firstcell {
    width: 54px;
    height: 55px;
    padding-left: 15px;
    border-right: 1px solid #5a5960;
    display: flex;
    align-items: center;
  }
  .tabs {
    display: flex;
    gap: 4.670px;
    padding-left: 3px;
  }
  .tab {
    width: 216px;
    height: 45px;
    padding: 0 11px 0 11px;
    display: flex;
    align-items: center;
    border-radius: 5px;
    font-size: 15px;
    letter-spacing: -0.520px;
  }
  .tab.active {
    background: #52525e;
    box-shadow: 0 0 3px #0008;
  }
  .tabtext {
    width: 150px;
    margin: 0 -1px 0 7px;
    padding-top: 1px;
    white-space: nowrap;
    overflow: hidden;
  }
  .fade {
    mask-image: linear-gradient(90deg, #000 122px, transparent 150px);
  }
  .tabtools {
    display: flex;
    align-items: center;
    gap: 34px;
    padding-left: 19px;
  }
  .wincontrols {
    display: flex;
    gap: 39px;
    margin-left: auto;
    padding-right: 20px;
  }

  /* address row */
  .navbar {
    height: 50px;
    background: #2b2a33;
    display: flex;
    align-items: center;
  }
  .navbuttons {
    width: 334px;
    display: flex;
    align-items: center;
    gap: 25px;
    padding-left: 10px;
  }
  .panelbtn {
    width: 40px;
    height: 40px;
    margin-right: -10px;
    border-radius: 5px;
    background: #6a6972;
    display: grid;
    place-items: center;
  }
  .urlbar {
    width: 1253px;
    height: 40px;
    padding: 0 10px;
    display: flex;
    align-items: center;
    gap: 14.500px;
    background: #1c1b22;
    border-radius: 5px;
  }
  .url {
    flex: 1;
    margin-left: -2px;
    padding-top: 3px;
    font-size: 17.300px;
    letter-spacing: -0.360px;
    color: #8b8a92;
    white-space: nowrap;
  }
  .url b {
    font-weight: 400;
    color: #fbfbfe;
  }
  .navtools {
    flex: 1;
    display: flex;
    align-items: center;
    justify-content: flex-end;
    gap: 25px;
    padding-right: 20px;
  }

  /* bookmarks */
  .bookmarks {
    height: 36px;
    padding-left: 15px;
    background: #2b2a33;
    border-bottom: 1px solid #45414b;
    display: grid;
    grid-template-columns: 141px 78px 98px 75px 78px 98px 76px 200px 162px 200px 200px 80px;
    align-items: center;
    font-size: 15px;
    letter-spacing: -0.440px;
  }
  .bookmark {
    display: flex;
    align-items: center;
    gap: 5px;
    white-space: nowrap;
  }
  .bookmark span {
    padding-top: 1px;
  }

  .body {
    height: 879px;
    display: flex;
  }
  .strip {
    width: 64px;
    padding: 18px 0 18px 22px;
    background: linear-gradient(90deg, #2b2a33 90%, #222128 98%, #45444d);
    display: flex;
    flex-direction: column;
    gap: 24px;
  }
  .grow {
    flex: 1;
  }

  /* site menu */
  .sidebar {
    width: 213px;
    padding-top: 25px;
    background: #0d7c66;
    font-family: 'Liberation Sans', Arial, sans-serif;
    font-size: 17.600px;
    letter-spacing: -0.050px;
  }
  .item {
    height: 50px;
  }
  .inner {
    height: 50px;
    padding: 7px 0 0 25px;
    display: flex;
    align-items: center;
    gap: 5px;
    line-height: 20px;
  }
  .inner span {
    margin-bottom: 3px;
  }
  .wide .inner {
    gap: 6px;
  }
  .wide .inner span {
    margin-bottom: 1px;
  }
  .sub {
    background: #0f7350;
    padding-left: 13px;
  }
  .sub .inner {
    gap: 6px;
  }
  .sub .inner span {
    margin-bottom: 2px;
  }
  .sub.active .inner {
    background: #41b3a3;
  }
  .caret {
    width: 14px;
    height: 9px;
    margin: 0 0 4px 2px;
  }

  main {
    flex: 1;
    background: #fff;
    font-family: 'Liberation Sans', Arial, sans-serif;
  }
  .banner {
    height: 176px;
    padding: 33px 214px 0 14px;
    display: flex;
    justify-content: space-between;
  }
  h1 {
    margin: 36px 0 0;
    font: 400 25px/35px Lato, sans-serif;
    letter-spacing: -0.200px;
    color: #008000;
    -webkit-text-stroke: 0.400px #008000;
  }
  .logo {
    width: 394px;
    height: 111px;
  }
  .brand {
    font: 800 111px Inter, sans-serif;
    fill: #3d6b0d;
    stroke: #3d6b0d;
    stroke-width: 2px;
  }
  .tag {
    font: 600 34px Inter, sans-serif;
    fill: #3d6b0d;
  }

  .cards {
    display: grid;
    grid-template-columns: 410.500px 411px 1fr;
    align-items: start;
  }
  .card {
    margin: 0 15px;
    min-width: 0;
    background: #56a394;
    border-radius: 12px;
    color: #fff;
  }
  h2 {
    margin: 0;
    padding-top: 1px;
    font-size: 16px;
    line-height: 23px;
    text-align: center;
    letter-spacing: 0.060px;
  }
  .form {
    padding: 0 6px 6px;
    display: grid;
    grid-template-columns: 1fr 1fr;
    column-gap: 12px;
    row-gap: 17px;
  }
  .form h2 {
    grid-column: 1 / -1;
    margin-bottom: -11px;
  }
  .full {
    grid-column: 1 / -1;
  }
  .label {
    height: 35px;
    padding-top: 5px;
    font-size: 16px;
    line-height: 24px;
    letter-spacing: -0.040px;
  }
  .box {
    height: 35px;
    background: #fff;
    border: 1px solid #dee2e6;
    border-radius: 8px;
  }
  .select {
    border-radius: 4px;
    padding: 0 18px 0 10px;
    display: flex;
    align-items: center;
    justify-content: space-between;
    color: #212529;
    font-size: 15px;
  }
  .chev {
    width: 15px;
    height: 15px;
    fill: none;
    stroke: #343a40;
    stroke-width: 2;
    stroke-linecap: round;
    stroke-linejoin: round;
  }
  .picture {
    height: 100px;
    border-color: #ccc;
  }
  .action {
    display: flex;
    justify-content: center;
    padding-top: 51px;
  }
  button {
    width: 48px;
    height: 34px;
    padding: 0;
    border: 0;
    border-radius: 4px;
    background: #0d6efd;
    color: #fff;
    font: 15px 'Liberation Sans', Arial, sans-serif;
  }
  .table {
    height: 84px;
  }
  .thead {
    height: 40px;
    padding: 11px 0 0 10px;
    border-bottom: 1px solid #dee2e6;
    display: grid;
    grid-template-columns: 112.500px 112.500px 150.500px 150.500px 100.500px 85.500px 1fr;
    font-size: 12.500px;
    font-weight: 700;
    line-height: 18px;
  }

  /* taskbar */
  .taskbar {
    height: 60px;
    padding-bottom: 1px;
    border-top: 1px solid #4c4241;
    background: linear-gradient(90deg, #2c1d1d 0, #2b1a1a 330px, #401718 550px, #2a1d1e 640px, #20201f 720px, #20201f 1180px, #3c1717 1370px, #391718 1450px, #241b1c 1640px, #231b1c 100%);
    display: flex;
    align-items: center;
    font-size: 15px;
    letter-spacing: -0.450px;
  }
  .weather {
    width: 346px;
    padding-left: 25px;
    display: flex;
    align-items: center;
    gap: 9px;
  }
  .wicon {
    position: relative;
  }
  .alert,
  .badge {
    position: absolute;
    display: grid;
    place-items: center;
    border-radius: 50%;
    color: #111;
    letter-spacing: 0;
  }
  .alert {
    left: 14px;
    top: -8px;
    width: 20px;
    height: 20px;
    background: #ff99a4;
    font-size: 12px;
  }
  .wtext,
  .clock {
    line-height: 20px;
  }
  .dim {
    color: #c9c3c3;
    letter-spacing: -0.250px;
  }
  .start {
    width: 45px;
  }
  .searchbox {
    width: 275px;
    height: 40px;
    padding: 0 6px 0 14px;
    border: 1px solid #6d5556;
    border-radius: 20px;
    background: linear-gradient(90deg, #493738, #603438 60%, #4a3334 85%, #403839);
    display: flex;
    align-items: center;
    color: #d5cdcd;
    font-size: 17px;
  }
  .searchbox span {
    margin-left: 11px;
  }
  .otter {
    width: 60px;
    height: 31px;
    margin-left: auto;
  }
  .apps {
    display: flex;
    padding-left: 2px;
  }
  .app {
    position: relative;
    width: 51px;
    height: 50px;
    margin: 0 2px;
    border-radius: 5px;
    display: grid;
    place-items: center;
  }
  .app.active {
    background: #3a2a2b;
    border: 1px solid #4b3a3a;
  }
  .app.active::after,
  .app.running::after {
    content: '';
    position: absolute;
    left: 50%;
    bottom: 1px;
    width: 8px;
    height: 4px;
    margin-left: -4px;
    border-radius: 2px;
    background: #9c9595;
  }
  .app.active::after {
    width: 20px;
    margin-left: -10px;
    bottom: 0;
    background: #4cc2ff;
  }
  .badge {
    left: 25px;
    top: 2px;
    width: 26px;
    height: 24px;
    border-radius: 12px;
    background: #4cc2ff;
    font-size: 13.500px;
  }
  .tray {
    flex: 1;
    padding-right: 24px;
    display: flex;
    align-items: center;
    justify-content: flex-end;
    gap: 9px;
  }
  .lang {
    margin: 0 12px 0 15px;
  }
  .clock {
    margin-left: 10px;
    width: 72px;
    text-align: right;
    white-space: nowrap;
  }
</style>
